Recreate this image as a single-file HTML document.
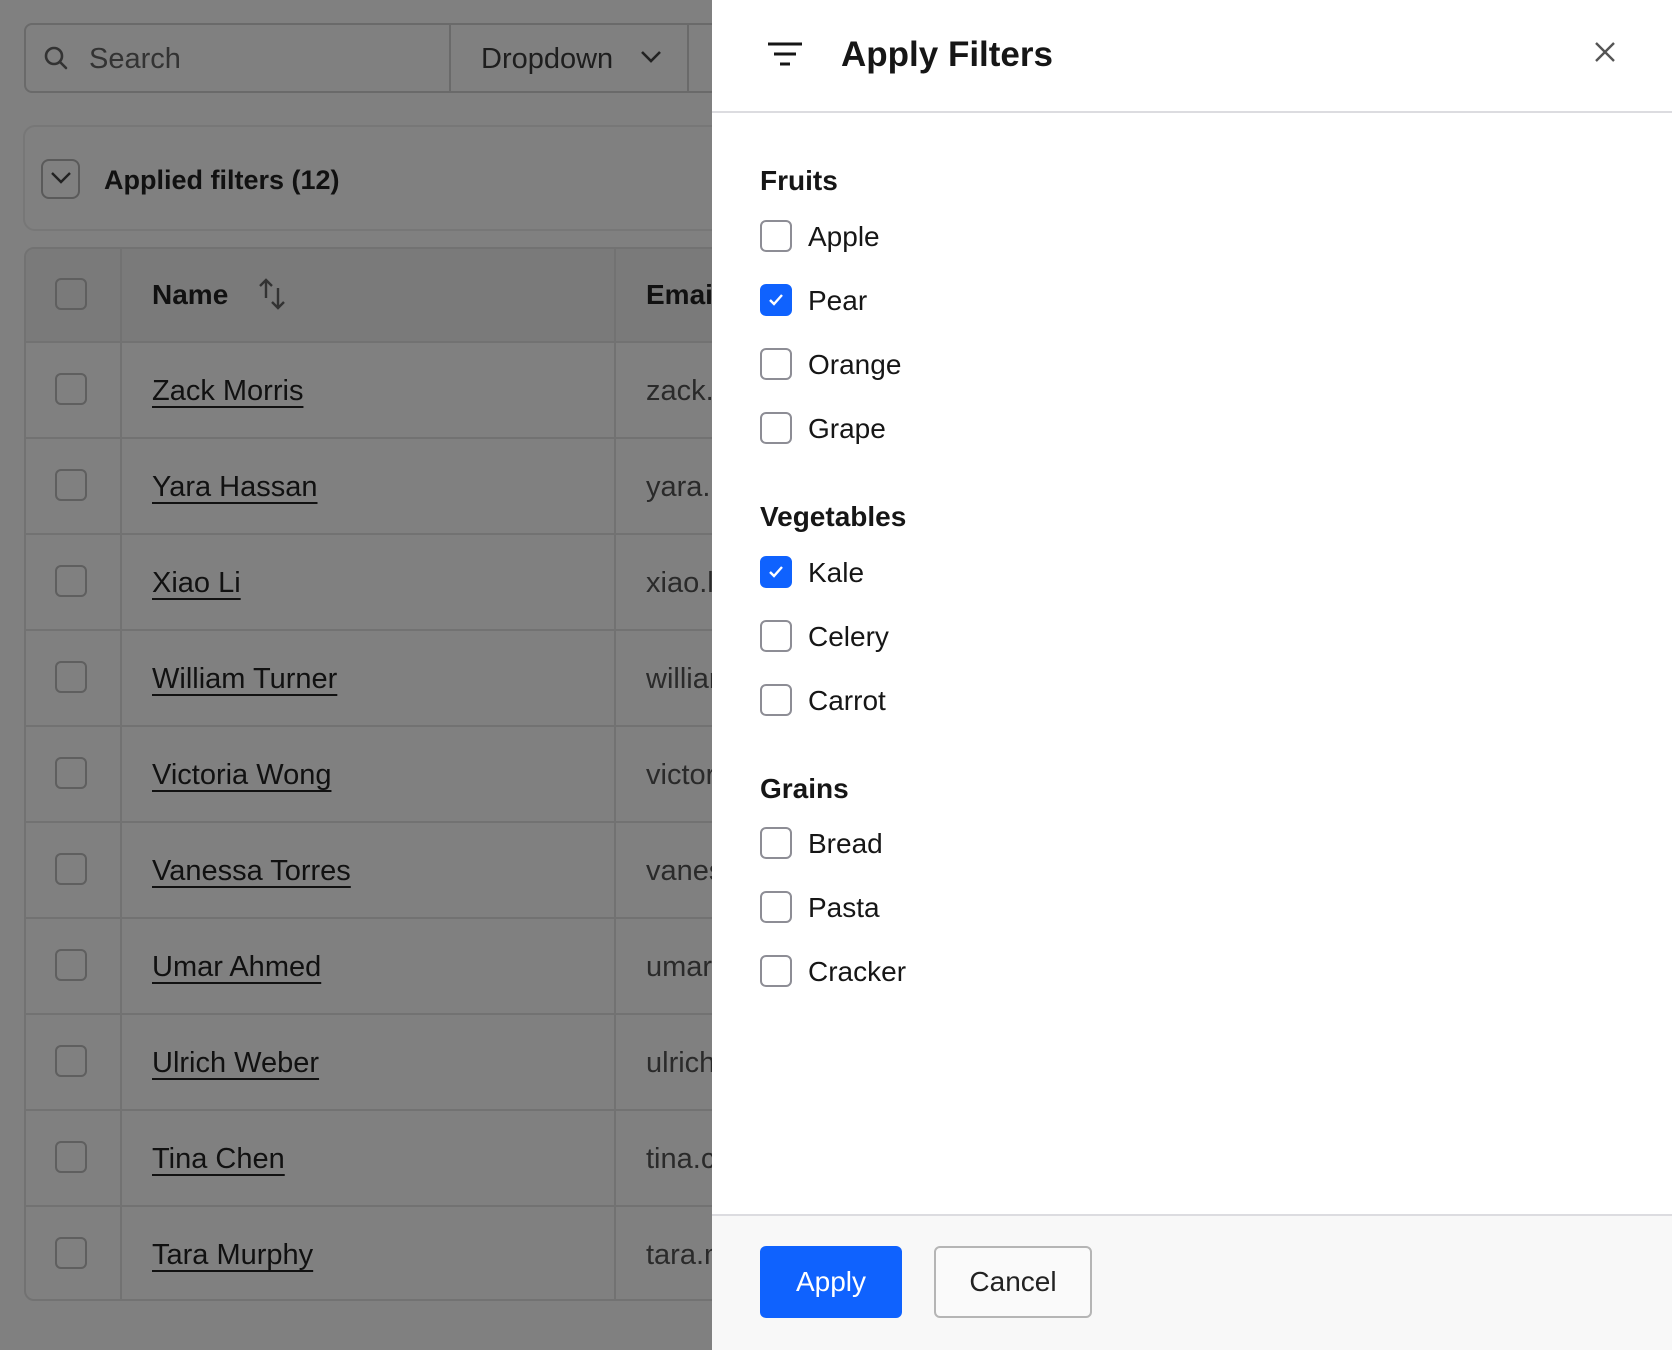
<!DOCTYPE html>
<html><head><meta charset="utf-8"><style>
*{box-sizing:border-box;margin:0;padding:0}
body{width:1672px;height:1350px;overflow:hidden;background:#808080;font-family:"Liberation Sans",sans-serif;position:relative;color:#111}
.abs{position:absolute}
.search{left:24px;top:23px;width:700px;height:70px;border:2px solid #6a6a6a;border-radius:8px;}
.cb{width:32px;height:32px;border:2px solid #5f5f5f;border-radius:6px;position:absolute}
.row{position:absolute;left:24px;width:700px;height:96px;border-top:2px solid #727272}
.name{position:absolute;left:128px;top:32px;font-size:29px;color:#111;text-decoration:underline;text-underline-offset:6px;text-decoration-thickness:2px}
.em{position:absolute;left:622px;top:32px;font-size:29px;color:#2a2a2a;white-space:nowrap}
.panel{left:712px;top:0;width:960px;height:1350px;background:#fff}
.pcb{position:absolute;left:48px;width:32px;height:32px;border:2px solid #8d8d95;border-radius:6px;background:#fff}
.pcb.on{background:#0f62fe;border-color:#0f62fe}
.lab{position:absolute;left:96px;font-size:28px;color:#161616}
.sec{position:absolute;left:48px;font-size:28px;font-weight:bold;color:#161616}
</style></head><body>
<div class="abs search"></div>
<div class="abs" style="left:449px;top:23px;width:2px;height:70px;background:#6a6a6a"></div>
<div class="abs" style="left:687px;top:23px;width:2px;height:70px;background:#6a6a6a"></div>
<svg class="abs" style="left:42px;top:44px" width="28" height="28" viewBox="0 0 28 28"><circle cx="12" cy="12" r="8" fill="none" stroke="#333" stroke-width="2.6"/><path d="M18 18l6 6" stroke="#333" stroke-width="2.6" stroke-linecap="round"/></svg>
<div class="abs" style="left:89px;top:43px;font-size:29px;color:#333">Search</div>
<div class="abs" style="left:481px;top:43px;font-size:29px;color:#1e1e1e">Dropdown</div>
<svg class="abs" style="left:640px;top:50px" width="22" height="14" viewBox="0 0 22 14"><path d="M2 2l9 9 9-9" fill="none" stroke="#222" stroke-width="2.6"/></svg>

<div class="abs" style="left:23px;top:125px;width:720px;height:106px;border:2px solid #777;border-radius:12px"></div>
<div class="abs" style="left:41px;top:159px;width:39px;height:40px;border:2px solid #5a5a5a;border-radius:8px"></div>
<svg class="abs" style="left:50px;top:171px" width="22" height="14" viewBox="0 0 22 14"><path d="M2 2l9 9 9-9" fill="none" stroke="#222" stroke-width="2.4"/></svg>
<div class="abs" style="left:104px;top:165px;font-size:27px;font-weight:bold;color:#111">Applied filters (12)</div>

<div class="abs" style="left:24px;top:247px;width:720px;height:1054px;border:2px solid #727272;border-radius:10px;overflow:hidden">
 <div style="position:absolute;left:0;top:0;width:720px;height:94px;background:#7a7a7a"></div>
</div>
<div class="abs" style="left:120px;top:248px;width:2px;height:1052px;background:#727272"></div>
<div class="abs" style="left:614px;top:248px;width:2px;height:1052px;background:#727272"></div>
<div class="cb" style="left:55px;top:278px"></div>
<div class="abs" style="left:152px;top:279px;font-size:28px;font-weight:bold">Name</div>
<svg class="abs" style="left:256px;top:276px" width="32" height="36" viewBox="0 0 32 36"><path d="M10 22V4M4 10l6-6 6 6M22 12v20M16 26l6 6 6-6" fill="none" stroke="#333" stroke-width="2.4"/></svg>
<div class="abs" style="left:646px;top:279px;font-size:28px;font-weight:bold">Email</div>

<div class="row" style="top:341px"><div class="cb" style="left:31px;top:30px"></div><span class="name">Zack Morris</span><span class="em">zack.morris</span></div>
<div class="row" style="top:437px"><div class="cb" style="left:31px;top:30px"></div><span class="name">Yara Hassan</span><span class="em">yara.hassan</span></div>
<div class="row" style="top:533px"><div class="cb" style="left:31px;top:30px"></div><span class="name">Xiao Li</span><span class="em">xiao.li</span></div>
<div class="row" style="top:629px"><div class="cb" style="left:31px;top:30px"></div><span class="name">William Turner</span><span class="em">william</span></div>
<div class="row" style="top:725px"><div class="cb" style="left:31px;top:30px"></div><span class="name">Victoria Wong</span><span class="em">victoria</span></div>
<div class="row" style="top:821px"><div class="cb" style="left:31px;top:30px"></div><span class="name">Vanessa Torres</span><span class="em">vanessa</span></div>
<div class="row" style="top:917px"><div class="cb" style="left:31px;top:30px"></div><span class="name">Umar Ahmed</span><span class="em">umar.ahmed</span></div>
<div class="row" style="top:1013px"><div class="cb" style="left:31px;top:30px"></div><span class="name">Ulrich Weber</span><span class="em">ulrich</span></div>
<div class="row" style="top:1109px"><div class="cb" style="left:31px;top:30px"></div><span class="name">Tina Chen</span><span class="em">tina.chen</span></div>
<div class="row" style="top:1205px"><div class="cb" style="left:31px;top:30px"></div><span class="name">Tara Murphy</span><span class="em">tara.murphy</span></div>

<div class="abs panel">
 <svg class="abs" style="left:55px;top:42px" width="36" height="26" viewBox="0 0 36 26"><path d="M1 2h34M7 12h22M13 22h10" stroke="#161616" stroke-width="3"/></svg>
 <div class="abs" style="left:129px;top:35px;font-size:35px;font-weight:bold;color:#161616">Apply Filters</div>
 <svg class="abs" style="left:882px;top:41px" width="22" height="22" viewBox="0 0 22 22"><path d="M2 2l18 18M20 2L2 20" stroke="#555" stroke-width="2.4"/></svg>
 <div class="abs" style="left:0;top:111px;width:960px;height:2px;background:#dcdce0"></div>

 <div class="sec" style="top:165px">Fruits</div>
 <div class="pcb" style="top:220px"></div><div class="lab" style="top:221px">Apple</div>
 <div class="pcb on" style="top:284px"><svg width="28" height="28" viewBox="0 0 28 28"><path d="M8 14l4 4 8-9" fill="none" stroke="#fff" stroke-width="2.4"/></svg></div><div class="lab" style="top:285px">Pear</div>
 <div class="pcb" style="top:348px"></div><div class="lab" style="top:349px">Orange</div>
 <div class="pcb" style="top:412px"></div><div class="lab" style="top:413px">Grape</div>

 <div class="sec" style="top:501px">Vegetables</div>
 <div class="pcb on" style="top:556px"><svg width="28" height="28" viewBox="0 0 28 28"><path d="M8 14l4 4 8-9" fill="none" stroke="#fff" stroke-width="2.4"/></svg></div><div class="lab" style="top:557px">Kale</div>
 <div class="pcb" style="top:620px"></div><div class="lab" style="top:621px">Celery</div>
 <div class="pcb" style="top:684px"></div><div class="lab" style="top:685px">Carrot</div>

 <div class="sec" style="top:773px">Grains</div>
 <div class="pcb" style="top:827px"></div><div class="lab" style="top:828px">Bread</div>
 <div class="pcb" style="top:891px"></div><div class="lab" style="top:892px">Pasta</div>
 <div class="pcb" style="top:955px"></div><div class="lab" style="top:956px">Cracker</div>

 <div class="abs" style="left:0;top:1214px;width:960px;height:136px;background:#f8f8f8;border-top:2px solid #dcdce0"></div>
 <div class="abs" style="left:48px;top:1246px;width:142px;height:72px;background:#0f62fe;border-radius:6px;color:#fff;font-size:28px;text-align:center;line-height:72px">Apply</div>
 <div class="abs" style="left:222px;top:1246px;width:158px;height:72px;border:2px solid #b5b5b5;border-radius:6px;background:#fafafa;color:#222;font-size:28px;text-align:center;line-height:68px">Cancel</div>
</div>
</body></html>
